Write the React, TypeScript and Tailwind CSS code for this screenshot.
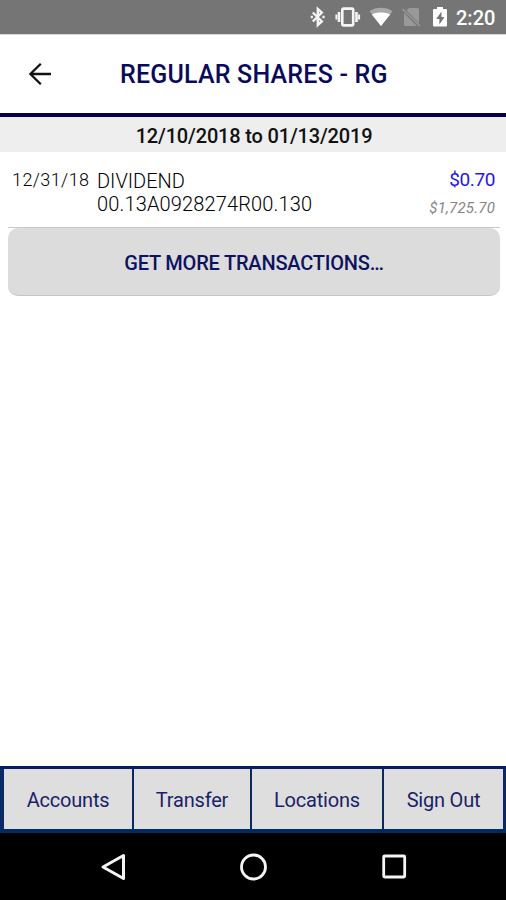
import React from 'react';

const tabs = [
  { label: 'Accounts', width: 'w-[128px]' },
  { label: 'Transfer', width: 'w-[116px]' },
  { label: 'Locations', width: 'w-[130px]' },
  { label: 'Sign Out', width: 'w-[119px]' },
];

const StatusBar = () => (
  <div className="flex h-[34px] shrink-0 items-center bg-[#757575] pl-[309px] text-white">
    {/* Bluetooth */}
    <svg className="h-[22px] w-[18px]" viewBox="0 0 18 22" fill="none" stroke="#f5f5f5" strokeWidth="2.400">
      <path d="M3.800 6.500l9 9-4 3.500V3l4 3.500-9 9" />
      <path d="M2.800 9.800v2.400M14.500 9.800v2.400" strokeWidth="2.200" />
    </svg>
    {/* Vibrate */}
    <svg className="ml-[7px] h-[22px] w-[28px]" viewBox="0 0 28 22" fill="none" stroke="#f5f5f5">
      <rect x="8.300" y="2.600" width="10.900" height="16.800" rx="1.300" strokeWidth="2.600" />
      <path d="M5 6v10M22.500 6v10" strokeWidth="2.600" />
      <path d="M2.400 8.500v5M25.100 8.500v5" strokeWidth="2" />
    </svg>
    {/* Wifi */}
    <svg className="ml-[6px] h-[22px] w-[26px]" viewBox="0 0 26 22">
      <path d="M1.500 5.300C8 .7 18 .7 24.500 5.300L13 20z" fill="#a8a8a8" />
      <path d="M3.800 8.400c5-2.600 13.400-2.600 18.400 0L13 20z" fill="#fff" />
    </svg>
    {/* No sim */}
    <svg className="ml-[7px] h-[22px] w-[21px]" viewBox="0 0 21 22">
      <path d="M8 2h8.500q1.500 0 1.500 1.500V17L5.500 4.500zM3 7l13 13H4.500Q3 20 3 18.500z" fill="#999" />
      <path d="M1.500 3l17.500 17" stroke="#999" strokeWidth="1.600" />
    </svg>
    {/* Battery */}
    <svg className="ml-[10px] h-[22px] w-[16px]" viewBox="0 0 16 22">
      <path d="M5 1h6v2h3q1 0 1 1v15.500q0 1-1 1H2q-1 0-1-1V4q0-1 1-1h3z" fill="#fff" />
      <path d="M9.500 5.500L4.200 13h3.200v5.500l5-7.500H9.500z" fill="#757575" />
    </svg>
    <span className="ml-[8px] mt-[2px] text-[20px] font-medium leading-none">2:20</span>
  </div>
);

const Header = () => (
  <div className="flex h-[79px] shrink-0 items-center border-t border-[#d4d4d4] bg-white">
    <svg className="ml-[28px] h-[24px] w-[24px]" viewBox="0 0 24 24" fill="none" stroke="#111" strokeWidth="2.300">
      <path d="M12.800 1.700L2.400 12l10.400 10.300M2.400 12H23" />
    </svg>
    <h1 className="ml-[68px] mt-[2px] whitespace-nowrap text-[25px] font-medium tracking-[0.2px] text-[#0a0a5c]">
      REGULAR SHARES - RG
    </h1>
  </div>
);

const Transaction = () => (
  <div className="flex h-[75px] shrink-0 whitespace-nowrap pl-[12px] pr-[11px] pt-[17px] text-black">
    <div className="w-[85px] text-[18px] font-light leading-[22px] tracking-[0.4px]">12/31/18</div>
    <div className="flex-1 pt-px text-[20px] font-light leading-[23px]">
      <div>DIVIDEND</div>
      <div className="tracking-[0.15px]">00.13A0928274R00.130</div>
    </div>
    <div className="text-right">
      <div className="text-[19px] leading-[22px] tracking-[-0.4px] text-[#2418e0]">$0.70</div>
      <div className="mt-[7px] text-[15px] italic leading-[20px] tracking-[0.2px] text-[#858585]">$1,725.70</div>
    </div>
  </div>
);

const TabBar = () => (
  <div className="flex h-[67px] shrink-0 gap-[2px] border-b-[4px] border-t-[3px] border-b-[#002a62] border-t-[#0a1c62] bg-[#0a2a66] pl-[4px]">
    {tabs.map((tab) => (
      <button
        key={tab.label}
        className={`${tab.width} flex shrink-0 items-center justify-center bg-[#dedede] pt-[2px] text-[20px] tracking-[-0.2px] text-[#1b1f68]`}
      >
        {tab.label}
      </button>
    ))}
  </div>
);

const SystemNav = () => (
  <div className="flex h-[67px] shrink-0 items-center bg-black pl-[100px]">
    <svg className="h-[30px] w-[28px]" viewBox="0 0 28 30" fill="none" stroke="#f5f5f5" strokeWidth="3">
      <path d="M23.500 3.500v23L3 15z" strokeLinejoin="round" />
    </svg>
    <svg className="ml-[111px] h-[30px] w-[30px]" viewBox="0 0 30 30" fill="none" stroke="#f5f5f5" strokeWidth="2.800">
      <circle cx="14.500" cy="15" r="12" />
    </svg>
    <svg className="ml-[111px] h-[30px] w-[30px]" viewBox="0 0 30 30" fill="none" stroke="#f5f5f5" strokeWidth="2.800">
      <rect x="3.700" y="4" width="21" height="21" rx="1" />
    </svg>
  </div>
);

const App = () => {
  return (
    <div className="flex h-[900px] w-[506px] flex-col overflow-hidden bg-white font-[Roboto,sans-serif]">
      <StatusBar />
      <Header />
      <div className="h-[4px] shrink-0 bg-[#0a0048]" />
      <div className="flex h-[35px] shrink-0 items-center justify-center bg-[#eee] pl-[2px] pt-[2px] text-[20px] font-medium tracking-[-0.17px] text-[#111]">
        12/10/2018 to 01/13/2019
      </div>
      <Transaction />
      <div className="ml-[8px] mr-[6px] border-t border-[#c9c9c9]">
        <button className="flex h-[68px] w-full items-center justify-center rounded-[10px] border-b border-[#c6c6c6] bg-[#dcdcdc] pt-[3px] text-[20px] font-medium tracking-[-0.2px] text-[#0d1260]">
          GET MORE TRANSACTIONS…
        </button>
      </div>
      <div className="flex-1" />
      <TabBar />
      <SystemNav />
    </div>
  );
};

export default App;
